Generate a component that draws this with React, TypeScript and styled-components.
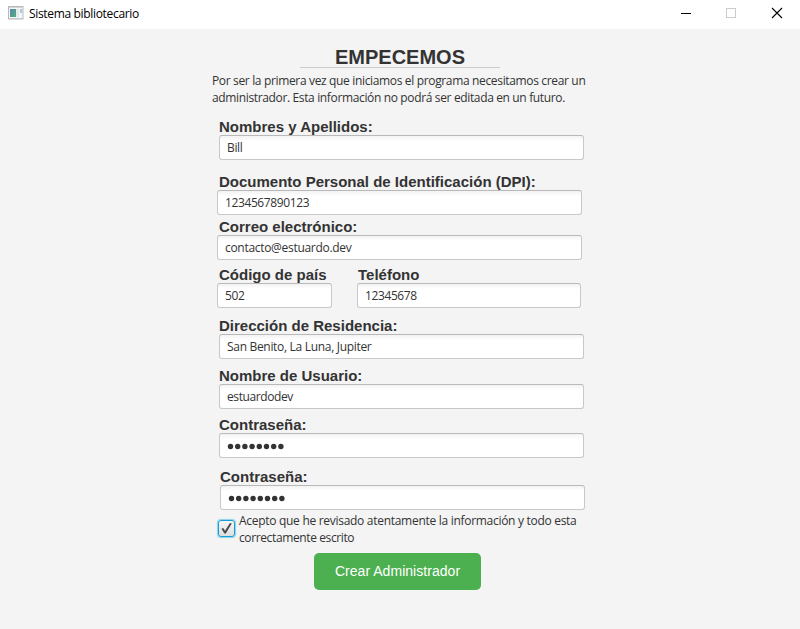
import React from 'react';
import styled, { createGlobalStyle } from 'styled-components';

const GlobalStyle = createGlobalStyle`
  * { box-sizing: border-box; }
  body { margin: 0; background: #f4f4f4; }
`;

const Window = styled.div`
  width: 800px;
  height: 629px;
  display: flex;
  flex-direction: column;
  overflow: hidden;
  background: #f4f4f4;
  color: #333;
  font-family: 'Open Sans', 'Noto Sans', sans-serif;
  font-size: 12px;
`;

const TitleBar = styled.header`
  height: 29px;
  flex: none;
  display: flex;
  align-items: flex-start;
  background: #fff;
  color: #000;
`;

const AppIcon = styled.svg`
  width: 16px;
  height: 14px;
  margin: 6px 5px 0 8px;
`;

const WindowTitle = styled.span`
  flex: 1;
  line-height: 27px;
  white-space: nowrap;
  letter-spacing: -0.33px;
`;

const Controls = styled.svg`
  width: 140px;
  height: 29px;
`;

const Form = styled.main`
  display: flex;
  flex-direction: column;
  padding: 15px 0 0 212px;
`;

const Heading = styled.h1`
  width: 200px;
  height: 24px;
  margin: 0 0 4px 88px;
  border-bottom: 1px solid #ccc;
  text-align: center;
  font: bold 20px/27px 'Liberation Sans', Arial, sans-serif;
`;

const Line = styled.span<{ $spacing: number }>`
  display: block;
  line-height: 17px;
  white-space: nowrap;
  letter-spacing: ${(p) => p.$spacing}px;
`;

const Intro = styled.div`
  height: 45px;
`;

const Row = styled.div<{ $gap: number }>`
  display: flex;
  margin-bottom: ${(p) => p.$gap}px;
`;

const Field = styled.label<{ $width: number; $left: number }>`
  display: flex;
  flex-direction: column;
  width: ${(p) => p.$width}px;
  margin-left: ${(p) => p.$left}px;
`;

const Caption = styled.span<{ $indent?: number }>`
  height: 18px;
  padding-left: ${(p) => p.$indent ?? 0}px;
  white-space: nowrap;
  font: bold 15px/20px 'Liberation Sans', Arial, sans-serif;
`;

const Input = styled.input<{ $spacing?: number }>`
  width: 100%;
  height: 25px;
  padding: 0 7px;
  border: 1px solid #c8c8c8;
  border-top-color: #b9b9b9;
  border-radius: 3px;
  outline: none;
  background: linear-gradient(#f3f3f3, #fff 5px);
  color: #333;
  font: inherit;
  letter-spacing: ${(p) => p.$spacing ?? 0}px;
`;

const SecretBox = styled.div`
  display: flex;
  align-items: center;
  height: 25px;
  padding: 2px 7px 0;
  border: 1px solid #c8c8c8;
  border-top-color: #b9b9b9;
  border-radius: 3px;
  background: linear-gradient(#f3f3f3, #fff 5px);
`;

const Agreement = styled.div`
  display: flex;
  height: 43px;
  margin-left: 6px;
`;

const CheckBox = styled.button`
  width: 17px;
  height: 17px;
  flex: none;
  margin: 10px 4px 0 0;
  padding: 0;
  border: 1.5px solid #12a0d4;
  border-radius: 3px;
  background: linear-gradient(#f7f7f7, #dedede);
  box-shadow: 0 0 1px 1px #8fd0e8;

  svg { display: block; }
`;

const AgreementText = styled.div`
  padding-top: 2px;
`;

const Submit = styled.button`
  width: 167px;
  height: 37px;
  margin-left: 102px;
  padding: 0 0 2px;
  border: 0;
  border-radius: 5px;
  background: #4caf50;
  color: #fff;
  font: 14px 'Liberation Sans', Arial, sans-serif;
  letter-spacing: 0.04px;
`;

type FieldSpec = {
  label: string;
  value?: string;
  dots?: number;
  left: number;
  width?: number;
  indent?: number;
  spacing?: number;
};

const rows: { gap: number; fields: FieldSpec[] }[] = [
  { gap: 12, fields: [{ label: 'Nombres y Apellidos:', value: 'Bill', left: 7, spacing: -0.35 }] },
  { gap: 2, fields: [{ label: 'Documento Personal de Identificación (DPI):', value: '1234567890123', left: 5, indent: 2, spacing: -0.39 }] },
  { gap: 5, fields: [{ label: 'Correo electrónico:', value: 'contacto@estuardo.dev', left: 5, indent: 2, spacing: -0.3 }] },
  {
    gap: 8,
    fields: [
      { label: 'Código de país', value: '502', left: 5, width: 115, indent: 2, spacing: -0.39 },
      { label: 'Teléfono', value: '12345678', left: 25, width: 224, indent: 1, spacing: -0.39 },
    ],
  },
  { gap: 7, fields: [{ label: 'Dirección de Residencia:', value: 'San Benito, La Luna, Jupiter', left: 7, spacing: -0.31 }] },
  { gap: 6, fields: [{ label: 'Nombre de Usuario:', value: 'estuardodev', left: 7, spacing: -0.4 }] },
  { gap: 9, fields: [{ label: 'Contraseña:', dots: 8, left: 7 }] },
  { gap: 0, fields: [{ label: 'Contraseña:', dots: 8, left: 8 }] },
];

function Dots({ count }: { count: number }) {
  return (
    <svg width={count * 7.2 + 1} height="7" fill="#333">
      {Array.from({ length: count }, (_, i) => (
        <circle key={i} cx={3.5 + i * 7.2} cy="3.5" r="2.7" />
      ))}
    </svg>
  );
}

function FormField({ label, value, dots, left, width = 365, indent, spacing }: FieldSpec) {
  return (
    <Field $left={left} $width={width}>
      <Caption $indent={indent}>{label}</Caption>
      {dots ? (
        <SecretBox><Dots count={dots} /></SecretBox>
      ) : (
        <Input defaultValue={value} $spacing={spacing} spellCheck={false} />
      )}
    </Field>
  );
}

export default function App() {
  return (
    <>
      <GlobalStyle />
      <Window>
        <TitleBar>
          <AppIcon viewBox="0 0 16 14">
            <defs>
              <linearGradient id="pane" x1="0" y1="0" x2="1" y2="1">
                <stop offset="0" stopColor="#5b86b5" />
                <stop offset="1" stopColor="#55ad78" />
              </linearGradient>
            </defs>
            <rect x=".5" y=".5" width="14.5" height="12.5" fill="#f6f6f6" stroke="#b5b9bb" />
            <path d="M1 1.5h14" stroke="#d3d6d8" />
            <rect x="2" y="3" width="6" height="8" fill="url(#pane)" />
            <rect x="8" y="3" width="3" height="8" fill="#e4e9e9" />
            <rect x="12" y="3" width="2" height="4" fill="#a9cbd7" />
            <path d="M1 12.5h14" stroke="#c8cbcd" />
          </AppIcon>
          <WindowTitle>Sistema bibliotecario</WindowTitle>
          <Controls viewBox="0 0 140 29" fill="none">
            <path d="M21 13.5h10" stroke="#000" />
            <rect x="66.500" y="8.500" width="9" height="9" stroke="#ccc" />
            <path d="M112 8l10 10M122 8l-10 10" stroke="#000" strokeWidth="1.1" />
          </Controls>
        </TitleBar>
        <Form>
          <Heading>EMPECEMOS</Heading>
          <Intro>
            <Line $spacing={-0.345}>Por ser la primera vez que iniciamos el programa necesitamos crear un</Line>
            <Line $spacing={-0.355}>administrador. Esta información no podrá ser editada en un futuro.</Line>
          </Intro>
          {rows.map((row, i) => (
            <Row key={i} $gap={row.gap}>
              {row.fields.map((f) => <FormField key={f.label} {...f} />)}
            </Row>
          ))}
          <Agreement>
            <CheckBox role="checkbox" aria-checked="true">
              <svg width="15" height="15" viewBox="0 0 15 15">
                <path d="M2.400 7.800L4.200 6.900L6 9.700L11 2L12.800 2.400L6.800 12.400H5.400Z" fill="#4a4a4a" />
              </svg>
            </CheckBox>
            <AgreementText>
              <Line $spacing={-0.29}>Acepto que he revisado atentamente la información y todo esta</Line>
              <Line $spacing={-0.38}>correctamente escrito</Line>
            </AgreementText>
          </Agreement>
          <Submit>Crear Administrador</Submit>
        </Form>
      </Window>
    </>
  );
}
